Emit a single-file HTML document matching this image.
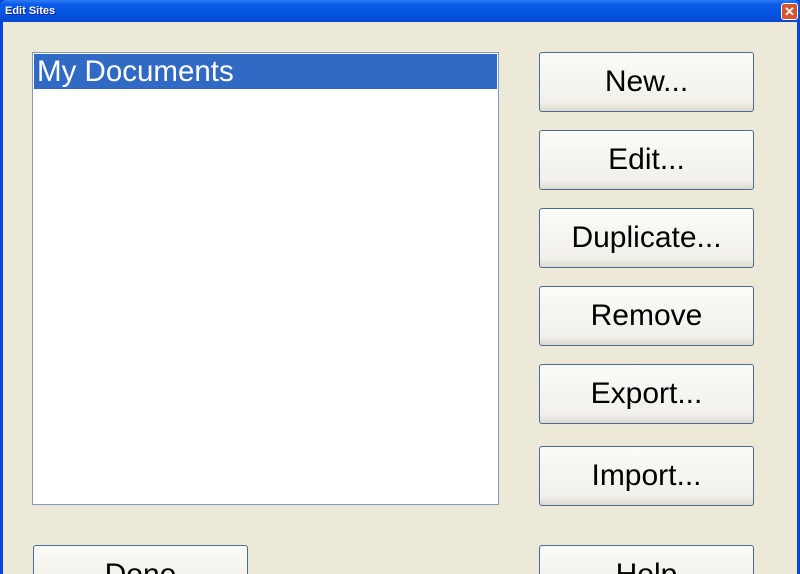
<!DOCTYPE html>
<html style="overflow:hidden;width:800px;height:574px"><head><style>
body{margin:0;width:800px;height:574px;overflow:hidden;background:#0842D8;font-family:"Liberation Sans",sans-serif;position:relative}
.title{position:absolute;left:0;top:0;width:800px;height:22px;background:linear-gradient(#2E7BF4 0%,#0A5CE8 20%,#0554E2 60%,#0848CE 100%);border-radius:6px 6px 0 0}
.title span{position:absolute;left:5px;top:5px;color:#fff;font-size:11px;font-weight:bold;text-shadow:1px 1px #0A1E8C}
.close{position:absolute;left:781px;top:3px;width:15px;height:15px;background:#D8542E;border:1px solid #fff;border-radius:3px;color:#fff;font-size:13px;font-weight:bold;text-align:center;line-height:15px}
.body{position:absolute;left:3px;top:22px;width:794px;height:552px;background:#ECE9D8}
.list{position:absolute;left:32px;top:52px;width:465px;height:451px;background:#fff;border:1px solid #7F9DB9}
.sel{position:absolute;left:1px;top:1px;width:463px;height:35px;background:#316AC5;color:#fff;font-size:29.5px;line-height:36px;padding-left:3px;box-sizing:border-box}
.btn{position:absolute;left:539px;width:213px;height:58px;border:1px solid #4A6C94;border-radius:3px;background:linear-gradient(#FBFBF8,#F1F0EA 85%,#DCDAD0);font-size:30px;text-align:center;line-height:58px;color:#000;overflow:hidden}
.bot{height:28px;border-bottom:none;border-radius:3px 3px 0 0;background:linear-gradient(#FBFBF8,#F3F2EC)}
</style></head><body>
<div class="title"><span>Edit Sites</span><div class="close">✕</div></div>
<div class="body"></div>
<div class="list"><div class="sel">My Documents</div></div>
<div class="btn" style="top:52px">New...</div>
<div class="btn" style="top:130px">Edit...</div>
<div class="btn" style="top:208px">Duplicate...</div>
<div class="btn" style="top:286px">Remove</div>
<div class="btn" style="top:364px">Export...</div>
<div class="btn" style="top:446px">Import...</div>
<div class="btn bot" style="top:545px;left:33px">Done</div>
<div class="btn bot" style="top:545px">Help</div>
</body></html>
